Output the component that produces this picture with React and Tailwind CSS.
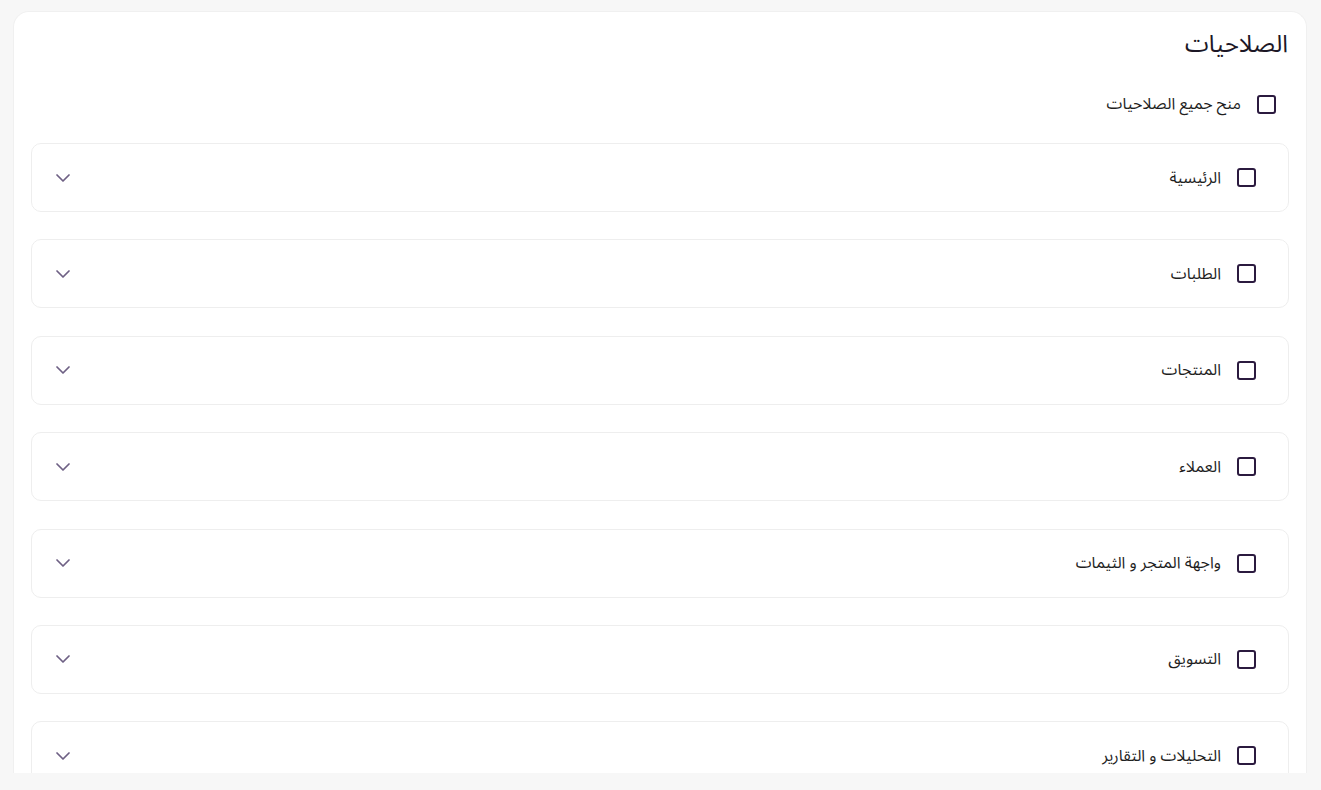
import React from "react";
import { ChevronDown } from "lucide-react";

const items = [
  "الرئيسية",
  "الطلبات",
  "المنتجات",
  "العملاء",
  "واجهة المتجر و الثيمات",
  "التسويق",
  "التحليلات و التقارير",
];

const font = {
  fontFamily: '"Noto Sans Arabic", "Noto Sans", "DejaVu Sans", sans-serif',
};

function Box() {
  return (
    <span className="block w-[19px] h-[19px] shrink-0 border-2 border-[#2b1a3f] rounded-[3px] bg-white" />
  );
}

export default function App() {
  return (
    <div
      className="w-full h-[790px] bg-[#f7f7f7] pt-[11px] pl-[13px] pr-[14px] pb-[17px] flex flex-col"
      style={font}
    >
      <div
        dir="rtl"
        className="flex-1 overflow-hidden bg-white rounded-t-[16px] border border-b-0 border-[#f0f0f0] px-[17px] pt-[18px]"
      >
        <h1 className="text-[24px] leading-[30px] font-normal text-[#1c1726] pr-px">
          الصلاحيات
        </h1>
        <label className="mt-[34px] flex items-center gap-4 pr-[13px] h-[20px] text-[16px] text-[#1f1f1f]">
          <Box />
          <span>منح جميع الصلاحيات</span>
        </label>
        <div className="mt-[29px] flex flex-col gap-[27.4px]">
          {items.map((t) => (
            <div
              key={t}
              className="h-[69px] shrink-0 border border-[#eeeeee] rounded-[10px] flex items-center justify-between pr-8 pl-[19px]"
            >
              <div className="flex items-center gap-4 text-[16px] text-[#1f1f1f]">
                <Box />
                <span>{t}</span>
              </div>
              <ChevronDown size={24} strokeWidth={1.75} className="text-[#6e6084]" />
            </div>
          ))}
        </div>
      </div>
    </div>
  );
}
